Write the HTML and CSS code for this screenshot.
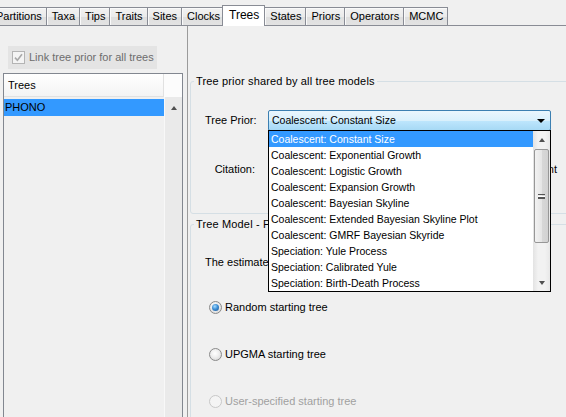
FILE: index.html
```html
<!DOCTYPE html>
<html>
<head>
<meta charset="utf-8">
<link rel="stylesheet" href="styles.css">
</head>
<body>
<div class="tabs">
  <div class="tab">Partitions</div>
  <div class="tab">Taxa</div>
  <div class="tab">Tips</div>
  <div class="tab">Traits</div>
  <div class="tab">Sites</div>
  <div class="tab">Clocks</div>
  <div class="tab active">Trees</div>
  <div class="tab">States</div>
  <div class="tab">Priors</div>
  <div class="tab">Operators</div>
  <div class="tab">MCMC</div>
</div>
<div class="main">
  <div class="left">
    <div class="linkbar">
      <span class="chk"><svg width="11" height="11" viewBox="0 0 11 11"><path d="M2 5.6 L4.4 8.3 L9 2.2" fill="none" stroke="#a9a9a9" stroke-width="1.6"/></svg></span>
      <span>Link tree prior for all trees</span>
    </div>
    <div class="list">
      <div class="list-main">
        <div class="list-head">Trees</div>
        <div class="list-row sel">PHONO</div>
      </div>
      <div class="list-scroll">
        <div class="scroll-corner"></div>
        <div class="scroll-track"><div class="sbtn"><span class="arr-up"></span></div></div>
      </div>
    </div>
  </div>
  <div class="splitter"></div>
  <div class="right">
    <fieldset class="group g1">
      <legend>Tree prior shared by all tree models</legend>
      <div class="frow prior">
        <span class="flabel">Tree Prior:</span>
        <div class="combo-wrap">
          <div class="combo"><span>Coalescent: Constant Size</span><span class="arr-down"></span></div>
          <div class="popup">
            <div class="items">
              <div class="item sel">Coalescent: Constant Size</div>
              <div class="item">Coalescent: Exponential Growth</div>
              <div class="item">Coalescent: Logistic Growth</div>
              <div class="item">Coalescent: Expansion Growth</div>
              <div class="item">Coalescent: Bayesian Skyline</div>
              <div class="item">Coalescent: Extended Bayesian Skyline Plot</div>
              <div class="item">Coalescent: GMRF Bayesian Skyride</div>
              <div class="item">Speciation: Yule Process</div>
              <div class="item">Speciation: Calibrated Yule</div>
              <div class="item">Speciation: Birth-Death Process</div>
            </div>
            <div class="pscroll">
              <div class="pbtn"><span class="arr-up"></span></div>
              <div class="thumb"><span class="grip"></span></div>
              <div class="pspace"></div>
              <div class="pbtn"><span class="arr-dn"></span></div>
            </div>
          </div>
        </div>
      </div>
      <div class="frow cite">
        <span class="flabel">Citation:</span>
        <span class="cite-text">Kingman JFC (1982) The Coalescent</span>
      </div>
    </fieldset>
    <fieldset class="group g2">
      <legend>Tree Model - PHONO</legend>
      <div class="est">The estimated starting tree for this model:</div>
      <div class="ropt first"><span class="radio on"></span><span>Random starting tree</span></div>
      <div class="ropt"><span class="radio"></span><span>UPGMA starting tree</span></div>
      <div class="ropt dis"><span class="radio"></span><span>User-specified starting tree</span></div>
    </fieldset>
  </div>
</div>
</body>
</html>
```
FILE: styles.css
```css
* { box-sizing: border-box; }
html, body { margin: 0; padding: 0; }
body {
  width: 566px;
  height: 417px;
  overflow: hidden;
  background: #f0f0f0;
  font-family: "Liberation Sans", Arial, sans-serif;
  font-size: 11px;
  line-height: 13px;
  color: #000;
}

/* tabs */
.tabs {
  display: flex;
  align-items: flex-end;
  height: 26px;
  margin-left: -10px;
  border-bottom: 1px solid #898c95;
}
.tab {
  height: 18px;
  padding: 0 4px 0 5px;
  margin-right: -1px;
  display: flex;
  align-items: center;
  border: 1px solid #898c95;
  border-bottom: none;
  background: linear-gradient(#f2f2f2, #ebebeb 50%, #dedede 51%, #e3e3e3);
  box-shadow: inset 1px 1px 0 #fafafa;
  white-space: nowrap;
}
.tab.active {
  position: relative;
  z-index: 1;
  height: 21px;
  margin: 0 -1px -1px -2px;
  padding: 0 5px 2px 6px;
  background: #ffffff;
  box-shadow: none;
  font-size: 12px;
}

/* main area */
.main {
  display: flex;
  height: 391px;
}
.left {
  width: 183px;
  padding-left: 3px;
  display: flex;
  flex-direction: column;
}
.linkbar {
  margin: 20px 0 4px 5px;
  width: 149px;
  height: 23px;
  background: #e4e4e4;
  display: flex;
  align-items: center;
  padding-left: 4px;
  gap: 4px;
  color: #6d6d6d;
  white-space: nowrap;
}
.chk {
  width: 13px;
  height: 13px;
  border: 1px solid #b4b4b4;
  background: #f4f4f4;
  display: flex;
  flex: none;
}

.list {
  flex: 1;
  display: flex;
  border: 1px solid #828790;
  border-bottom: none;
  background: #f0f0f0;
}
.list-main { flex: 1; }
.list-head {
  height: 23px;
  padding-left: 4px;
  display: flex;
  align-items: center;
  background: linear-gradient(#ffffff, #f4f4f4);
  border-bottom: 1px solid #e1e1e1;
  border-right: 1px solid #e1e1e1;
}
.list-row {
  margin-top: 2px;
  height: 17px;
  padding-left: 1px;
  display: flex;
  align-items: center;
}
.list-row.sel { background: #3399ff; }
.list-scroll {
  width: 18px;
  display: flex;
  flex-direction: column;
}
.scroll-corner {
  height: 23px;
  background: #fcfcfc;
}
.scroll-track {
  flex: 1;
  background: #eaeaea;
  border-left: 1px solid #f8f8f8;
}
.sbtn {
  height: 20px;
  display: flex;
  align-items: center;
  justify-content: center;
  padding-top: 2px;
}
.arr-up {
  width: 0; height: 0;
  border-left: 3.5px solid transparent;
  border-right: 3.5px solid transparent;
  border-bottom: 4px solid #505050;
}
.arr-dn {
  width: 0; height: 0;
  border-left: 3.5px solid transparent;
  border-right: 3.5px solid transparent;
  border-top: 4px solid #505050;
}
.splitter {
  width: 5px;
  border-right: 1px solid #9b9b9b;
}

.right {
  flex: 1;
  padding-top: 49px;
  margin-right: -30px;
}
.group {
  margin: 0 0 0 2px;
  padding: 0;
  border: 1px solid #d5dfe5;
  border-radius: 3px;
  min-width: 0;
}
.group legend {
  margin-left: 3px;
  padding: 0 2px;
  line-height: 13px;
  letter-spacing: 0.15px;
}
.g1 { padding-bottom: 37px; }
.g2 { margin-top: 4px; height: 250px; }

.frow {
  display: flex;
  align-items: center;
  padding-left: 14px;
}
.flabel {
  width: 50px;
  margin-right: 13px;
  text-align: right;
  white-space: nowrap;
}
.prior { margin-top: 22px; }
.cite { margin-top: 32px; }
.cite-text {
  width: 289px;
  text-align: right;
  white-space: nowrap;
}

.combo-wrap {
  position: relative;
  width: 283px;
}
.combo {
  height: 21px;
  border: 1px solid #3c7fb1;
  border-radius: 2px;
  background: linear-gradient(#eaf6fd, #d9f0fc 50%, #bee6fd 51%, #a7d9f5);
  display: flex;
  align-items: center;
  justify-content: space-between;
  padding: 0 5px 0 3px;
  font-size: 10.5px;
}
.arr-down {
  width: 0; height: 0;
  border-left: 4px solid transparent;
  border-right: 4px solid transparent;
  border-top: 4px solid #000;
}
.popup {
  position: absolute;
  z-index: 5;
  top: 20px;
  left: 0;
  width: 283px;
  height: 162px;
  border: 1px solid #000;
  background: #fff;
  display: flex;
  font-size: 10.5px;
}
.items { flex: 1; }
.item {
  height: 16px;
  padding-left: 2px;
  display: flex;
  align-items: center;
  white-space: nowrap;
}
.item.sel {
  background: #3399ff;
  color: #fff;
}
.pscroll {
  width: 17px;
  display: flex;
  flex-direction: column;
  background: linear-gradient(90deg, #e3e3e3, #f2f2f2 30%, #f2f2f2 70%, #e8e8e8);
}
.pbtn {
  height: 17px;
  display: flex;
  align-items: center;
  justify-content: center;
}
.thumb {
  margin: 1px 1px 0;
  height: 94px;
  border: 1px solid #979797;
  border-radius: 2px;
  background: linear-gradient(90deg, #f2f2f2, #e6e6e6 50%, #d8d8d8 51%, #d2d2d2);
  display: flex;
  align-items: center;
  justify-content: center;
}
.grip {
  width: 7px;
  height: 5px;
  border-top: 1px solid #555;
  border-bottom: 1px solid #555;
  background: linear-gradient(#fff 0 1px, #555 1px 2px, #fff 2px) 0 1px / 100% 3px no-repeat;
}
.pspace { flex: 1; }

.est {
  margin-top: 25px;
  padding-left: 14px;
  white-space: nowrap;
}
.ropt {
  margin-top: 34px;
  padding-left: 18px;
  display: flex;
  align-items: center;
  gap: 3px;
  height: 13px;
}
.ropt.first { margin-top: 32px; }
.ropt.dis { color: #a0a0a0; }
.radio {
  width: 13px;
  height: 13px;
  border-radius: 50%;
  border: 1px solid #8a8a8a;
  background: radial-gradient(circle at 45% 40%, #ffffff 0, #f0f0f0 40%, #cfcfcf 100%);
  display: flex;
  align-items: center;
  justify-content: center;
}
.radio.on::after {
  content: "";
  width: 7px;
  height: 7px;
  border-radius: 50%;
  background: radial-gradient(circle at 40% 35%, #a6dcff 0, #3d8fd6 45%, #1a4f8c 100%);
}
.ropt.dis .radio {
  border-color: #c8c8c8;
  background: #f4f4f4;
}
```
